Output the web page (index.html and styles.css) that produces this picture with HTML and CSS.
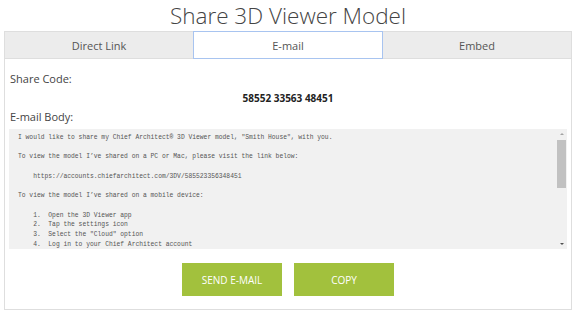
FILE: index.html
```html
<!DOCTYPE html>
<html>
<head>
<meta charset="utf-8">
<link rel="stylesheet" href="styles.css">
</head>
<body>
<h1 class="title">Share 3D Viewer Model</h1>
<div class="share">
  <div class="tabs">
    <div class="tab">Direct Link</div>
    <div class="tab active">E-mail</div>
    <div class="tab">Embed</div>
  </div>
  <div class="panel">
    <div class="label">Share Code:</div>
    <div class="code">58552 33563 48451</div>
    <div class="label body-label">E-mail Body:</div>
    <div class="mailbox">
<pre class="mailtext">I would like to share my Chief Architect® 3D Viewer model, "Smith House", with you.

To view the model I’ve shared on a PC or Mac, please visit the link below:

    https://accounts.chiefarchitect.com/3DV/585523356348451

To view the model I’ve shared on a mobile device:

    1.  Open the 3D Viewer app
    2.  Tap the settings icon
    3.  Select the "Cloud" option
    4.  Log in to your Chief Architect account</pre>
      <div class="scrollbar">
        <div class="arrow up"></div>
        <div class="track"><div class="thumb"></div></div>
        <div class="arrow down"></div>
      </div>
    </div>
    <div class="actions">
      <button class="btn">SEND E-MAIL</button>
      <button class="btn">COPY</button>
    </div>
  </div>
</div>
</body>
</html>
```
FILE: styles.css
```css
html, body {
  margin: 0;
  padding: 0;
  background: #fff;
}
body {
  font-family: "Open Sans", "Liberation Sans", sans-serif;
  color: #444;
}
.title {
  margin: 0;
  padding-bottom: 0;
  font-size: 22.5px;
  font-weight: 300;
  line-height: 31px;
  height: 31px;
  text-align: center;
  color: #444;
}
.share {
  margin: 0 4px;
}
.tabs {
  display: grid;
  grid-template-columns: 188px 190px 1fr;
  height: 26px;
  background: #ececec;
  border: 1px solid #dedede;
}
.tab {
  display: flex;
  align-items: center;
  justify-content: center;
  font-size: 11px;
  color: #555;
}
.tab.active {
  background: #fff;
  border: 1px solid #a8c4f0;
  margin: -1px 0;
}
.panel {
  border: 1px solid #dedede;
  border-top: none;
  padding: 12px 4px 13px 4px;
  display: flex;
  flex-direction: column;
}
.label {
  font-size: 11px;
  line-height: 15px;
  color: #444;
  padding-left: 1px;
}
.code {
  text-align: center;
  font-weight: 700;
  font-size: 10px;
  line-height: 15px;
  color: #222;
  margin-top: 5px;
}
.body-label {
  margin-top: 3px;
}
.mailbox {
  margin-top: 5px;
  height: 120px;
  background: #f1f1f1;
  display: flex;
  overflow: hidden;
}
.mailtext {
  flex: 1;
  margin: 0;
  padding: 4px 0 0 9px;
  font-family: "Liberation Mono", "DejaVu Sans Mono", monospace;
  font-size: 6.32px;
  line-height: 9.7px;
  color: #555;
  overflow: hidden;
  white-space: pre;
}
.scrollbar {
  width: 9px;
  margin-right: 1px;
  display: flex;
  flex-direction: column;
  background: #f1f1f1;
}
.arrow {
  height: 10px;
  display: flex;
  align-items: center;
  justify-content: center;
}
.arrow::before {
  content: "";
  width: 0;
  height: 0;
  border-left: 2px solid transparent;
  border-right: 2px solid transparent;
}
.arrow.up::before {
  border-bottom: 2px solid #a3a3a3;
}
.arrow.down::before {
  border-top: 2px solid #505050;
}
.track {
  flex: 1;
}
.thumb {
  height: 48px;
  background: #c1c1c1;
  margin-top: 1px;
}
.actions {
  display: flex;
  justify-content: center;
  gap: 12px;
  margin-top: 14px;
}
.btn {
  width: 100px;
  height: 33px;
  border: none;
  background: #a2c13d;
  color: #fff;
  font-family: "Open Sans", "Liberation Sans", sans-serif;
  font-size: 10px;
  padding: 0;
}
```
